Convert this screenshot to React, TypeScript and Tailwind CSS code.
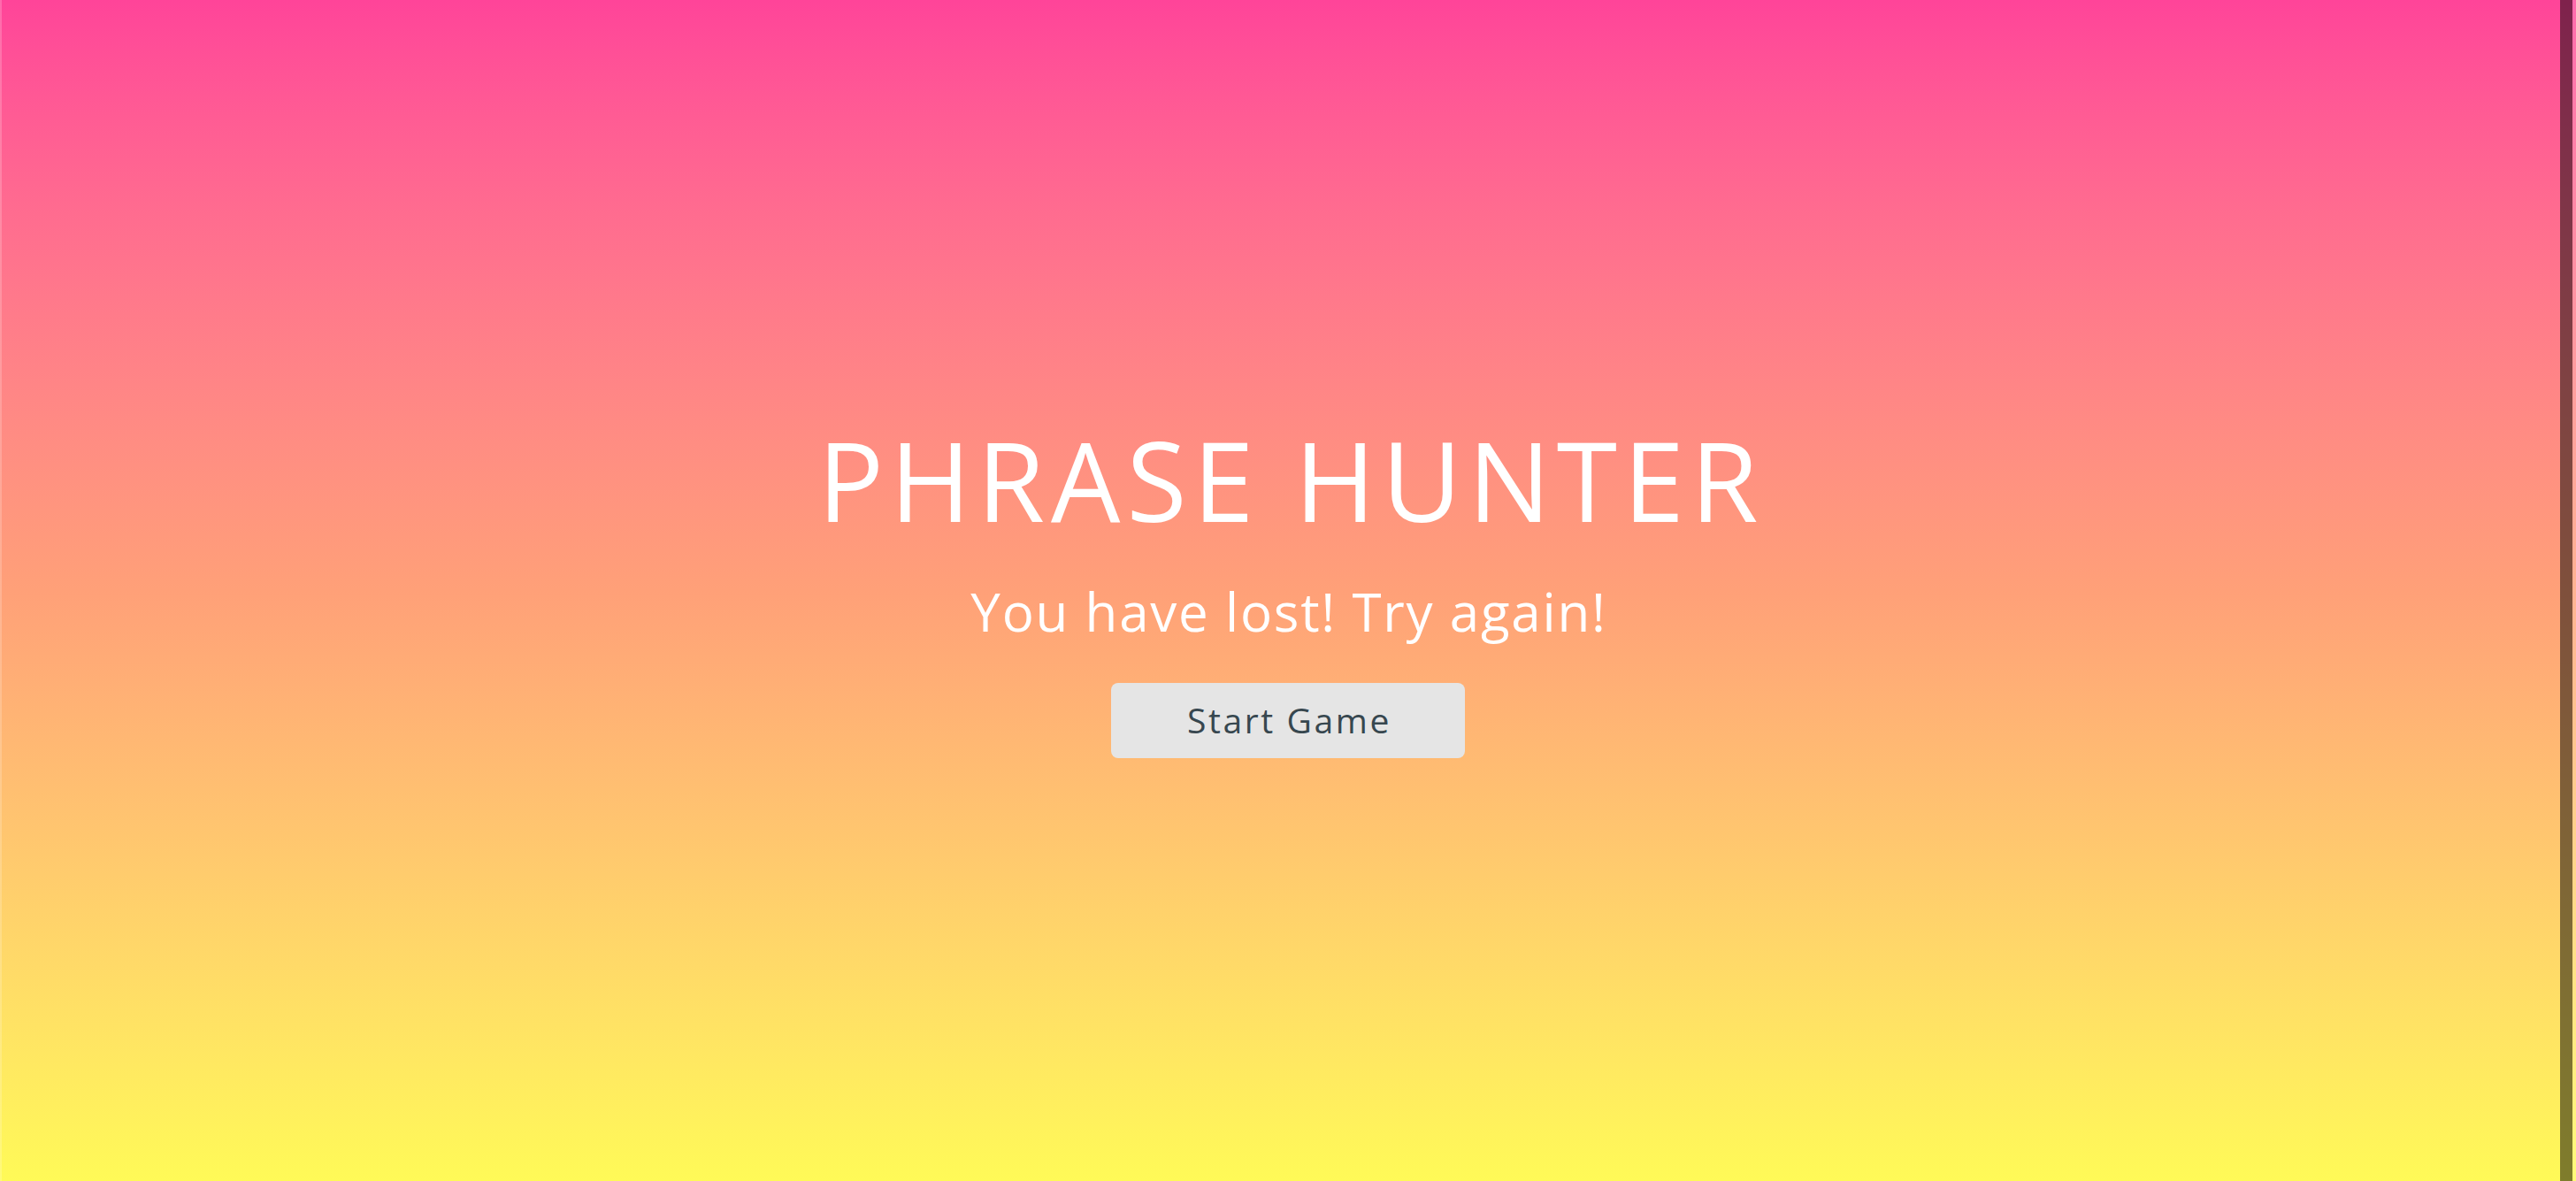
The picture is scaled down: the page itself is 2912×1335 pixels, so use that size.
export default function App() {
  return (
    <div className="relative h-[1335px] w-full overflow-hidden bg-gradient-to-b from-[#ff4499] via-[#ffa078] to-[#fffa57] font-['Open_Sans',sans-serif]">
      <div className="flex h-full flex-col items-center justify-center pt-[2px]">
        <h1 className="pl-[7px] text-[124px] font-normal leading-none tracking-[7px] text-white">PHRASE HUNTER</h1>
        <p className="mt-[57px] pl-[2px] text-[60px] leading-none tracking-[1.8px] text-white">You have lost! Try again!</p>
        <button className="mt-[51px] h-[85px] w-[400px] rounded-[8px] bg-[#e5e5e5] pl-[3px] text-[39px] tracking-[2.6px] text-[#37474f]">
          Start Game
        </button>
      </div>
      <div className="absolute left-0 top-0 h-full w-[2px] bg-white/20" />
      <div className="absolute right-[4px] top-0 h-full w-[14px] bg-black/50" />
      <div className="absolute right-[0px] top-0 h-full w-[4px] bg-white/20" />
    </div>
  );
}
